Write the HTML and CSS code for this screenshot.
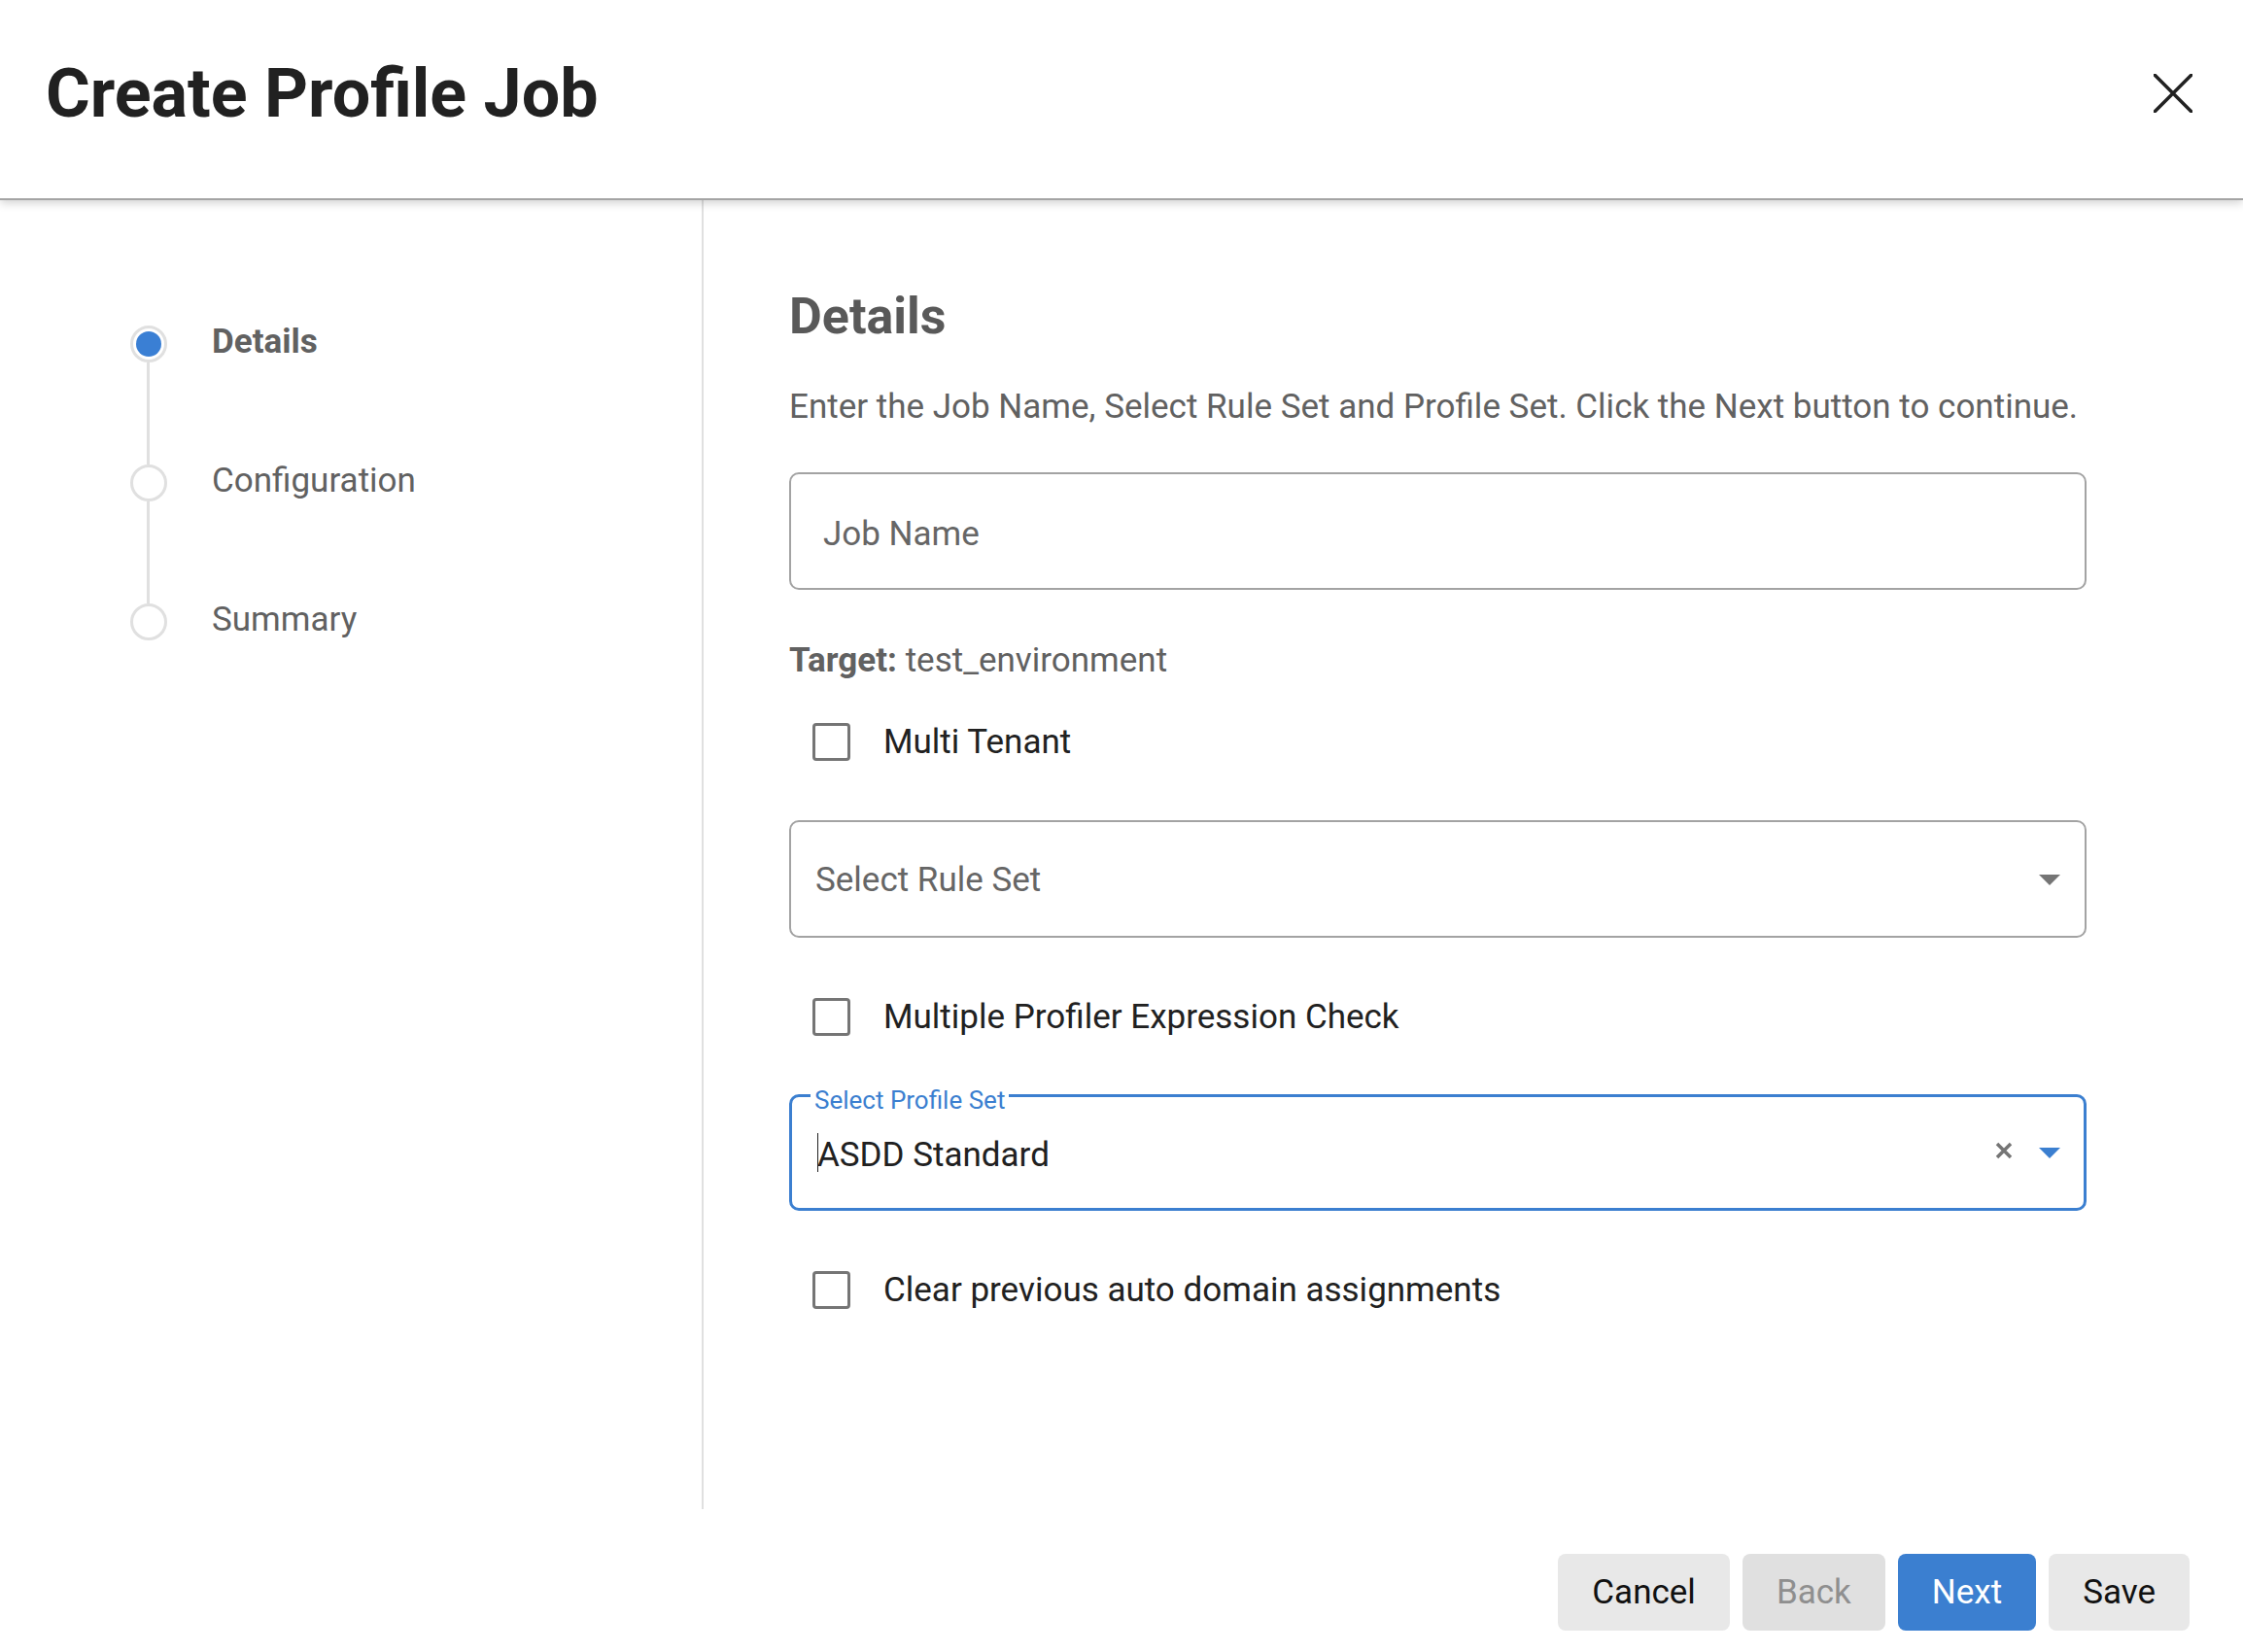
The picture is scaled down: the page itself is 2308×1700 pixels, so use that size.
FILE: index.html
```html
<!DOCTYPE html>
<html lang="en">
<head>
  <meta charset="UTF-8" />
  <meta name="viewport" content="width=device-width, initial-scale=1.0"/>
  <title>Create Profile Job</title>
  <link rel="stylesheet" href="styles.css">
</head>
<body>
  <div class="dialog">
    <header class="dialog-header">
      <h1>Create Profile Job</h1>
      <button class="close-button" aria-label="Close">
        <svg width="40" height="40" viewBox="0 0 40 40">
          <path d="M1 1 L39 39 M39 1 L1 39" stroke="#212121" stroke-width="3.5" stroke-linecap="round" fill="none"/>
        </svg>
      </button>
    </header>

    <div class="dialog-body">
      <aside class="stepper">
        <div class="step active">
          <span class="step-dot"></span>
          <span class="step-label">Details</span>
        </div>
        <div class="step-line"></div>
        <div class="step">
          <span class="step-dot"></span>
          <span class="step-label">Configuration</span>
        </div>
        <div class="step-line"></div>
        <div class="step">
          <span class="step-dot"></span>
          <span class="step-label">Summary</span>
        </div>
      </aside>

      <main class="step-content">
        <h2>Details</h2>
        <p class="intro">Enter the Job Name, Select Rule Set and Profile Set. Click the Next button to continue.</p>

        <input type="text" class="text-field" placeholder="Job Name" />

        <div class="target"><b>Target:</b> test_environment</div>

        <label class="check-row">
          <span class="check-box"></span>
          <span>Multi Tenant</span>
        </label>

        <div class="select-field">
          <span class="select-placeholder">Select Rule Set</span>
          <span class="select-arrow"></span>
        </div>

        <label class="check-row">
          <span class="check-box"></span>
          <span>Multiple Profiler Expression Check</span>
        </label>

        <div class="select-field focused">
          <span class="float-label">Select Profile Set</span>
          <span class="select-value"><span class="caret"></span>ASDD Standard</span>
          <svg class="clear-icon" width="18" height="18" viewBox="0 0 18 18">
            <path d="M2 2 L16 16 M16 2 L2 16" stroke="#757575" stroke-width="3.5" fill="none"/>
          </svg>
          <span class="select-arrow"></span>
        </div>

        <label class="check-row">
          <span class="check-box"></span>
          <span>Clear previous auto domain assignments</span>
        </label>
      </main>
    </div>

    <footer class="dialog-footer">
      <button class="btn">Cancel</button>
      <button class="btn" disabled>Back</button>
      <button class="btn primary">Next</button>
      <button class="btn">Save</button>
    </footer>
  </div>
</body>
</html>
```

FILE: styles.css
```css
body {
  margin: 0;
  font-family: Roboto, "Noto Sans", Arial, sans-serif;
  background: #ffffff;
}

.dialog {
  height: 100vh;
  display: flex;
  flex-direction: column;
}

/* header */
.dialog-header {
  position: relative;
  z-index: 1;
  height: 192px;
  padding: 0 52px 12px 47px;
  display: flex;
  align-items: center;
  justify-content: space-between;
  border-bottom: 2px solid #a4a4a4;
  box-shadow: 0 3px 9px rgba(0, 0, 0, 0.18);
  background: #fff;
}
.dialog-header h1 {
  margin: 0;
  font-size: 70px;
  line-height: 72px;
  font-weight: 700;
  color: #212121;
}
.close-button {
  border: none;
  background: none;
  padding: 0;
  width: 40px;
  height: 40px;
  cursor: pointer;
}

/* body */
.dialog-body {
  height: 1347px;
  display: flex;
}

.stepper {
  width: 724px;
  border-right: 2px solid #e0e0e0;
  padding: 129px 0 0 134px;
  box-sizing: border-box;
  flex-shrink: 0;
}
.step {
  display: flex;
  align-items: center;
  gap: 46px;
  height: 38px;
}
.step-dot {
  width: 38px;
  height: 38px;
  box-sizing: border-box;
  border: 3px solid #e0e0e0;
  border-radius: 50%;
  background: #fff;
  display: flex;
  align-items: center;
  justify-content: center;
  flex-shrink: 0;
}
.step.active .step-dot::after {
  content: "";
  width: 26px;
  height: 26px;
  border-radius: 50%;
  background: #3a7fd4;
}
.step-label {
  font-size: 35px;
  color: #616161;
  margin-top: -6px;
}
.step.active .step-label {
  font-weight: 700;
}
.step-line {
  width: 3px;
  height: 105px;
  margin-left: 17px;
  background: #e0e0e0;
}

.step-content {
  flex: 1;
  padding: 89px 161px 0 88px;
  display: flex;
  flex-direction: column;
  align-items: stretch;
}
.step-content h2 {
  margin: 0;
  font-size: 52px;
  line-height: 62px;
  font-weight: 700;
  color: #595959;
}
.intro {
  margin: 42px 0 0;
  font-size: 35px;
  line-height: 40px;
  color: #616161;
}

.text-field {
  margin-top: 47px;
  height: 121px;
  box-sizing: border-box;
  border: 2px solid #a3a3a3;
  border-radius: 10px;
  padding: 6px 0 0 33px;
  font-family: inherit;
  font-size: 35px;
  color: #212121;
  outline: none;
}
.text-field::placeholder {
  color: #666666;
}

.target {
  margin-top: 53px;
  font-size: 35px;
  line-height: 40px;
  color: #616161;
}

.check-row {
  margin-top: 61px;
  height: 40px;
  display: flex;
  align-items: center;
  padding-left: 24px;
  gap: 34px;
  font-size: 35px;
  color: #212121;
}
.target + .check-row {
  margin-top: 43px;
}
.check-box {
  width: 39px;
  height: 39px;
  box-sizing: border-box;
  border: 3px solid #757575;
  border-radius: 4px;
  flex-shrink: 0;
}

.select-field {
  position: relative;
  margin-top: 61px;
  height: 121px;
  box-sizing: border-box;
  border: 2px solid #a3a3a3;
  border-radius: 10px;
  padding: 2px 25px 0;
  display: flex;
  align-items: center;
  font-size: 35px;
}
.select-field.focused {
  margin-top: 60px;
  height: 120px;
  border: 3px solid #3b7fd0;
  padding: 4px 24px 0 26px;
}
.select-placeholder {
  flex: 1;
  color: #666666;
}
.select-value {
  flex: 1;
  color: #212121;
  font-size: 35px;
  position: relative;
}
.caret {
  position: absolute;
  left: 0;
  top: -2px;
  width: 1px;
  height: 40px;
  background: #212121;
}
.select-arrow {
  width: 0;
  height: 0;
  border-left: 11px solid transparent;
  border-right: 11px solid transparent;
  border-top: 11px solid #757575;
}
.focused .select-arrow {
  border-top-color: #3b7fd0;
  margin-top: -4px;
}
.clear-icon {
  margin-right: 27px;
  margin-top: -8px;
}
.float-label {
  position: absolute;
  left: 19px;
  top: -12px;
  padding: 0 4px;
  background: #fff;
  font-size: 26px;
  line-height: 30px;
  color: #3b7fd0;
}

/* footer */
.dialog-footer {
  height: 147px;
  box-sizing: border-box;
  padding: 46px 55px 0 0;
  display: flex;
  justify-content: flex-end;
  align-items: flex-start;
  gap: 13px;
}
.btn {
  height: 79px;
  padding: 0 35px;
  border: none;
  border-radius: 8px;
  background: #e8e8e8;
  color: #111111;
  font-family: inherit;
  font-size: 35px;
  cursor: pointer;
}
.btn:disabled {
  background: #e0e0e0;
  color: #8f8f8f;
  cursor: default;
}
.btn.primary {
  background: #3b7fd0;
  color: #ffffff;
}
```
